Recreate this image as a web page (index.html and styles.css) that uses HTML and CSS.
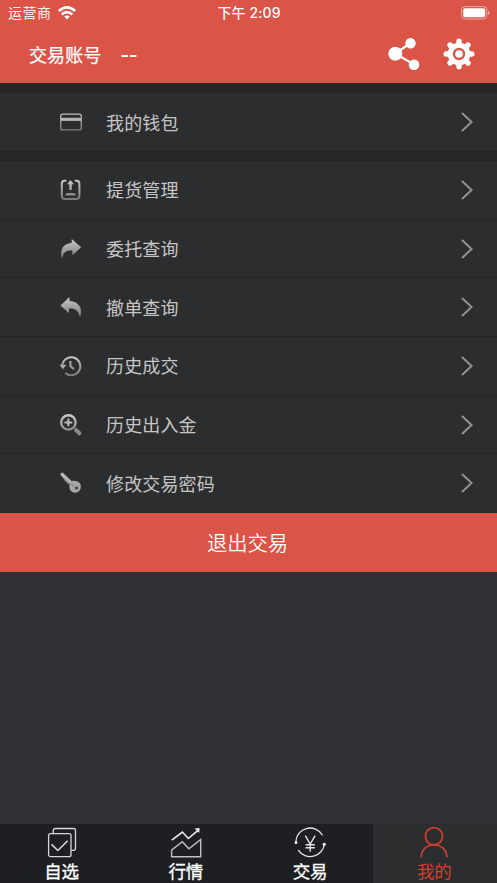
FILE: index.html
```html
<!DOCTYPE html>
<html lang="zh-CN">
<head>
<meta charset="utf-8">
<title>我的</title>
<link rel="stylesheet" href="styles.css">
</head>
<body>
<svg class="defs" width="0" height="0" aria-hidden="true">
  <defs>
    <linearGradient id="silver" gradientUnits="userSpaceOnUse" x1="0" y1="2" x2="0" y2="24">
      <stop offset="0" stop-color="#c8c8c8"/><stop offset="1" stop-color="#707172"/>
    </linearGradient>
  </defs>
</svg>
<div class="app">
  <header class="header">
    <div class="status">
      <div class="carrier"><span>运营商</span>
        <svg class="wifi" viewBox="0 0 18 14"><g fill="none" stroke="#fff" stroke-width="2.6"><path d="M.8 5.1Q9-2.2 17.2 5.1"/><path d="M3.7 8.5q5.3-4.7 10.6 0"/></g><path d="M6.2 10.6q2.8-2.2 5.6 0L9 13.4z" fill="#fff"/></svg>
      </div>
      <div class="time">下午 2:09</div>
      <svg class="battery" viewBox="0 0 29 14"><rect x=".6" y=".6" width="25.2" height="12.4" rx="3.6" fill="none" stroke="#fff" stroke-opacity=".5"/><rect x="2.2" y="2.3" width="22" height="9" rx="2" fill="#fff"/><path d="M27.2 4.8q1.5.6 1.5 2t-1.5 2z" fill="#fff" fill-opacity=".6"/></svg>
    </div>
    <div class="account">
      <span class="account-label">交易账号</span><span class="account-value">--</span>
      <svg class="share" viewBox="0 0 32 32"><path d="M22.5 5 7.3 15.7 26 26.5" fill="none" stroke="#fff" stroke-width="2.2"/><g fill="#fff"><circle cx="7.3" cy="15.7" r="7"/><circle cx="22.5" cy="5.2" r="5.2"/><circle cx="26" cy="26.7" r="5.3"/></g></svg>
      <svg class="gear" viewBox="-16 -16 32 32"><g stroke="#fff" stroke-width="5.4" stroke-linecap="round"><path d="M0-12.8V12.8M-12.8 0H12.8M-9-9 9 9M9-9-9 9"/></g><circle r="11.3" fill="#fff"/><circle r="5" fill="#fff" stroke="#da5447" stroke-width="2.4"/></svg>
    </div>
  </header>

  <main>
    <section class="group">
      <a class="row"><svg class="icon" viewBox="0 0 24 24"><rect x="1.7" y="4.1" width="20.6" height="15.8" rx="2" fill="none" stroke="url(#silver)" stroke-width="1.3"/><path d="M2 7.8h20v3.1H2z" fill="#b5b5b5"/></svg><span>我的钱包</span><svg class="chevron" viewBox="0 0 12 20"><path d="m1 1 9.6 9L1 19"/></svg></a>
    </section>
    <section class="group">
      <a class="row"><svg class="icon" viewBox="0 0 24 24"><path d="M7.4 2.8H5.5Q2.8 2.8 2.8 6v11.7q0 3.2 3.2 3.2h11.2q3.2 0 3.2-3.2V6q0-3.2-2.7-3.2h-1.9" fill="none" stroke="url(#silver)" stroke-width="2"/><path d="M11.5 2 15 6.2h-2.2V12h-2.5V6.2H8z" fill="url(#silver)"/><path d="M6.3 17.5q0-2.5 2.7-2.5h5.2q2.7 0 2.7 2.5z" fill="#8e8e8e"/></svg><span>提货管理</span><svg class="chevron" viewBox="0 0 12 20"><path d="m1 1 9.6 9L1 19"/></svg></a>
      <a class="row"><svg class="icon" viewBox="0 0 24 24"><path d="M12.7 2 22.2 10.3 13.4 18.2V13.6C7.2 13.2 4.2 15.2 3.1 22 .2 13.2 4.2 6.3 12.7 6z" fill="url(#silver)"/></svg><span>委托查询</span><svg class="chevron" viewBox="0 0 12 20"><path d="m1 1 9.6 9L1 19"/></svg></a>
      <a class="row"><svg class="icon" viewBox="0 0 24 24"><path d="M10.5 2 1.4 10.4 10 18.2V13.6C16.1 13.2 19.4 15.6 21 22.4 24.3 13.2 19.6 6.3 10.5 6z" fill="url(#silver)"/></svg><span>撤单查询</span><svg class="chevron" viewBox="0 0 12 20"><path d="m1 1 9.6 9L1 19"/></svg></a>
      <a class="row"><svg class="icon" viewBox="0 0 24 24"><g fill="none" stroke="url(#silver)" stroke-width="2"><path d="M3.3 12A9 9 0 1 1 6.3 18.9"/><path d="M11.4 7v5l3.5 3.3"/></g><path d="M.4 10.8h7L4 15.3z" fill="#a9a9a9"/></svg><span>历史成交</span><svg class="chevron" viewBox="0 0 12 20"><path d="m1 1 9.6 9L1 19"/></svg></a>
      <a class="row"><svg class="icon" viewBox="0 0 24 24"><circle cx="9.4" cy="9.4" r="7.2" fill="none" stroke="url(#silver)" stroke-width="2.4"/><path d="M5.5 9.4h7.8M9.4 5.5v7.8" stroke="#bdbdbd" stroke-width="2"/><path d="m17 17 3.4 3.3" stroke="#88898a" stroke-width="4" stroke-linecap="round"/></svg><span>历史出入金</span><svg class="chevron" viewBox="0 0 12 20"><path d="m1 1 9.6 9L1 19"/></svg></a>
      <a class="row"><svg class="icon" viewBox="0 0 24 24"><path d="m3.2 3.4 9.6 9" stroke="#b5b5b5" stroke-width="3.4" stroke-linecap="round"/><path d="m4.3 7.4 1.5.8.4 1.8 1.7.4.5 1.7 1.8.5" fill="none" stroke="#999" stroke-width="1"/><path d="M11 10.8q2.6-1.4 5.6-.8 5.5 1.2 5.3 6-.4 5.3-5.8 5.7-5-.2-5.7-5.5-.1-3.3.6-5.4" fill="#a6a6a6"/><path d="m11.7 12.6 4.4 3.8" stroke="#6c6c6c" stroke-width=".8"/><circle cx="17.6" cy="17" r="1.5" fill="#3a3a3a"/></svg><span>修改交易密码</span><svg class="chevron" viewBox="0 0 12 20"><path d="m1 1 9.6 9L1 19"/></svg></a>
    </section>
    <button class="logout">退出交易</button>
  </main>

  <nav class="tabs">
    <a class="tab"><svg viewBox="0 0 32 32"><g fill="none" stroke="#d8d8d8" stroke-width="1.3"><path d="M7.3 6.4V3.5q0-2 2-2h18.2q2 0 2 2v17.8q0 2-2 2h-2.7"/><rect x="2.6" y="6.7" width="22.4" height="23" rx="2"/><path d="m5.5 17.4 6.4 6.1 9.8-9.8" stroke-width="1.6"/></g></svg><span>自选</span></a>
    <a class="tab"><svg viewBox="0 0 32 32"><g fill="none" stroke="#c0c0c0" stroke-width="1.4"><path d="M1.8 13.2 12.4 5l5.9 6.5 9.7-8.2" stroke="#eee" stroke-width="1.6"/><path d="M1.6 29.8V23.2l10.7-8.4 6.6 7 11.8-9.4v17.4z"/></g><path d="m24.6 1.4 5-.5-.4 5z" fill="#eee"/></svg><span>行情</span></a>
    <a class="tab"><svg viewBox="0 0 32 32"><g fill="none" stroke="#e4e4e4" stroke-width="1.3"><path d="M1.8 15.5A14.3 14.3 0 0 1 28.5 8.2M30.5 16.5A14.4 14.4 0 0 1 4.2 23.2"/><path d="m11.3 8.7 4.9 8.4 4.9-8.4M16.2 17.1v7.6M11.6 17.8h9.2M11.6 20.8h9.2" stroke-width="1.4"/></g><g fill="#fff"><circle cx="2" cy="15.7" r="1.4"/><circle cx="30.2" cy="17.2" r="1.5"/></g></svg><span>交易</span></a>
    <a class="tab active"><svg viewBox="0 0 32 32"><g fill="none" stroke="#d43e2f" stroke-width="1.7"><circle cx="16" cy="9.3" r="8.6"/><path d="M3.2 30.2C3.5 22.5 8.5 18 16 18s12.5 4.5 12.8 12.2"/></g></svg><span>我的</span></a>
  </nav>
</div>
</body>
</html>
```

FILE: styles.css
```css
* { box-sizing: border-box; }
body {
  margin: 0;
  background: #303134;
  color: #c6c6c6;
  font-family: "Noto Sans CJK SC", sans-serif;
}
svg { display: block; flex: none; }
.defs { position: absolute; }
.app { display: flex; flex-direction: column; height: 883px; }
.header { height: 83px; background: #da5447; color: #fff; }
.status {
  display: grid;
  grid-template-columns: 1fr auto 1fr;
  align-items: center;
  height: 25px;
  padding: 0 7px 0 8px;
  line-height: 25px;
}
.carrier { display: flex; align-items: center; gap: 6px; font-size: 14px; font-weight: 350; letter-spacing: .5px; }
.wifi { width: 18px; height: 14px; }
.time { font-family: Inter, "Noto Sans CJK SC", sans-serif; font-size: 14px; font-weight: 500; letter-spacing: .1px; }
.battery { width: 29px; height: 14px; justify-self: end; }
.account {
  display: flex;
  align-items: center;
  height: 58px;
  padding: 0 22px 0 29px;
  font-size: 18px;
  font-weight: 400;
  letter-spacing: .1px;
  -webkit-text-stroke: .25px currentColor;
}
.account-label { padding-bottom: 1px; }
.account-value { margin-left: 19px; font-family: Inter, sans-serif; font-weight: 600; }
.share { width: 32px; height: 32px; margin-left: auto; }
.gear { width: 32px; height: 32px; margin-left: 23px; }
.group { padding-top: 10px; background: #252628; }
.row {
  display: flex;
  align-items: center;
  height: 58.7px;
  padding: 0 24px 0 59px;
  background: #2c2d2f;
  border-bottom: 1px solid #252628;
  font-size: 18px;
  letter-spacing: .15px;
}
.row span { padding-bottom: 1px; }
.group:first-child .row { height: 58px; border: 0; }
.icon { width: 24px; height: 24px; margin-right: 23px; }
.chevron { width: 12px; height: 20px; margin-left: auto; fill: none; stroke: #929394; stroke-width: 2; }
.logout {
  display: block;
  width: 100%;
  height: 58.8px;
  padding: 0 2px 2px 0;
  border: 0;
  background: #da5447;
  color: #fff;
  font: 350 20.3px "Noto Sans CJK SC", sans-serif;
}
.tabs { display: grid; grid-template-columns: repeat(4, 1fr); height: 59px; margin-top: auto; background: #1e1f22; }
.tab {
  display: flex;
  flex-direction: column;
  align-items: center;
  padding: 3px 1px 0 0;
  color: #fff;
  font-size: 17.5px;
  font-weight: 400;
  line-height: 24px;
  -webkit-text-stroke: .3px currentColor;
}
.tab svg { width: 32px; height: 32px; }
.tab.active { background: #2c2d2f; color: #d43e2f; -webkit-text-stroke: 0; }
```
